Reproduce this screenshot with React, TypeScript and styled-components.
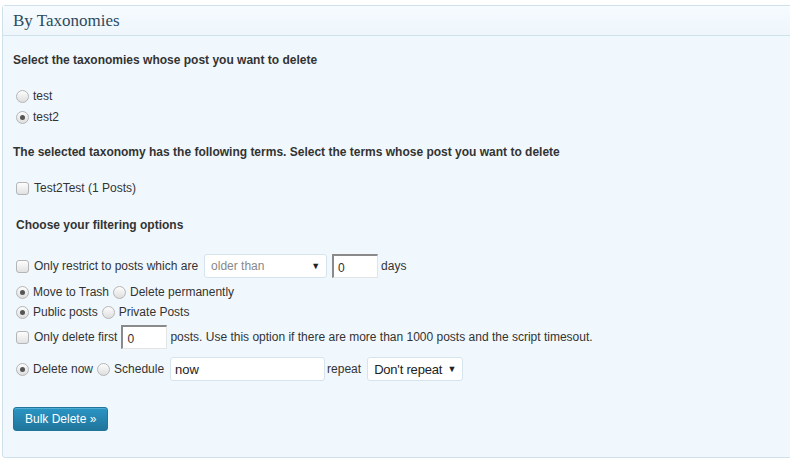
import styled, { createGlobalStyle } from 'styled-components';

const Global = createGlobalStyle`
    html, body {
        margin: 0;
        padding: 0;
        background: #fff;
        overflow: hidden;
    }
    body {
        font-family: "Liberation Sans", Arial, sans-serif;
        font-size: 12px;
        color: #333;
    }
`;

const Panel = styled.div`
    margin: 5px 0 0 2px;
    width: 820px;
    border: 1px solid #cfe2ec;
    border-radius: 3px;
    background: #f1f8fd;
`;

const PanelHeader = styled.div`
    height: 29px;
    display: flex;
    align-items: center;
    padding-left: 10px;
    border-bottom: 1px solid #cfe2ec;
    background: linear-gradient(to bottom, #f6fbff, #eef6fc);
    font-family: "Liberation Serif", "Times New Roman", serif;
    font-size: 17px;
    color: #2d4a5e;
`;

const Body = styled.div`
    padding: 0 10px 26px 10px;
`;

const Heading = styled.div<{ $top: number; $indent?: number }>`
    margin-top: ${(p) => p.$top}px;
    padding-left: ${(p) => p.$indent ?? 0}px;
    font-weight: bold;
    line-height: 16px;
`;

const Row = styled.div<{ $top: number; $h?: number }>`
    margin-top: ${(p) => p.$top}px;
    height: ${(p) => p.$h ?? 20}px;
    display: flex;
    align-items: center;
    padding-left: 3px;
    white-space: nowrap;
`;

const Radio = styled.span<{ $on?: boolean }>`
    width: 11px;
    height: 11px;
    border-radius: 50%;
    border: 1px solid #b5b5b5;
    background: linear-gradient(to bottom, #fdfdfd, #dedede);
    display: inline-flex;
    align-items: center;
    justify-content: center;
    flex-shrink: 0;
    margin-right: 4px;

    &::after {
        content: '';
        display: ${(p) => (p.$on ? 'block' : 'none')};
        width: 5px;
        height: 5px;
        border-radius: 50%;
        background: #555;
    }
`;

const Check = styled.span`
    width: 11px;
    height: 11px;
    border-radius: 3px;
    border: 1px solid #b5b5b5;
    background: linear-gradient(to bottom, #fdfdfd, #e2e2e2);
    flex-shrink: 0;
    margin-right: 5px;
`;

const Label = styled.span`
    margin-right: 4px;
`;

const Select = styled.div<{ $w: number; $muted?: boolean }>`
    width: ${(p) => p.$w}px;
    height: 24px;
    box-sizing: border-box;
    margin: 0 5px 0 2px;
    padding: 0 6px 0 6px;
    display: flex;
    align-items: center;
    justify-content: space-between;
    flex-shrink: 0;
    background: #fff;
    border: 1px solid #d6e4ee;
    border-radius: 3px;
    color: ${(p) => (p.$muted ? '#888' : '#222')};
    font-size: ${(p) => (p.$muted ? 12 : 13)}px;
    letter-spacing: ${(p) => (p.$muted ? 0 : -0.2)}px;

    &::after {
        content: '▼';
        color: #222;
        font-size: 9px;
    }
`;

const SunkenInput = styled.div<{ $w: number }>`
    width: ${(p) => p.$w}px;
    height: 24px;
    box-sizing: border-box;
    margin-right: 3px;
    padding: 2px 0 0 4px;
    display: flex;
    align-items: center;
    flex-shrink: 0;
    background: #fff;
    border-style: solid;
    border-width: 2px 1px 1px 2px;
    border-color: #8a8a8a #e4e4e4 #e4e4e4 #8a8a8a;
    color: #333;
`;

const TextInput = styled.div<{ $w: number }>`
    width: ${(p) => p.$w}px;
    height: 24px;
    box-sizing: border-box;
    margin: 0 2px 0 2px;
    padding: 0 4px;
    display: flex;
    align-items: center;
    flex-shrink: 0;
    background: #fff;
    border: 1px solid #d6e4ee;
    border-radius: 3px;
    color: #222;
    font-size: 13px;
`;

const Button = styled.button`
    margin-top: 26px;
    height: 24px;
    padding: 0 11px;
    border: 1px solid #21759b;
    border-radius: 3px;
    background: linear-gradient(to bottom, #2a95c5, #21759b);
    color: #fff;
    font-family: "Liberation Sans", Arial, sans-serif;
    font-size: 12px;
    box-shadow: inset 0 1px 0 rgba(120, 200, 230, 0.5);
`;

export default function App() {
    return (
        <>
            <Global />
            <Panel>
                <PanelHeader>By Taxonomies</PanelHeader>
                <Body>
                    <Heading $top={16}>Select the taxonomies whose post you want to delete</Heading>

                    <Row $top={18}>
                        <Radio />
                        <Label>test</Label>
                    </Row>
                    <Row $top={1}>
                        <Radio $on />
                        <Label>test2</Label>
                    </Row>

                    <Heading $top={17}>
                        The selected taxonomy has the following terms. Select the terms whose post you want to delete
                    </Heading>

                    <Row $top={18}>
                        <Check />
                        <Label>Test2Test (1 Posts)</Label>
                    </Row>

                    <Heading $top={19} $indent={3}>Choose your filtering options</Heading>

                    <Row $top={21} $h={24}>
                        <Check />
                        <Label>Only restrict to posts which are</Label>
                        <Select $w={123} $muted>older than</Select>
                        <SunkenInput $w={46}>0</SunkenInput>
                        <Label>days</Label>
                    </Row>
                    <Row $top={4}>
                        <Radio $on />
                        <Label>Move to Trash</Label>
                        <Radio />
                        <Label>Delete permanently</Label>
                    </Row>
                    <Row $top={0}>
                        <Radio $on />
                        <Label>Public posts</Label>
                        <Radio />
                        <Label>Private Posts</Label>
                    </Row>
                    <Row $top={3} $h={24}>
                        <Check />
                        <Label>Only delete first</Label>
                        <SunkenInput $w={46}>0</SunkenInput>
                        <Label>posts. Use this option if there are more than 1000 posts and the script timesout.</Label>
                    </Row>
                    <Row $top={8} $h={24}>
                        <Radio $on />
                        <Label>Delete now</Label>
                        <Radio />
                        <Label>Schedule</Label>
                        <TextInput $w={155}>now</TextInput>
                        <Label>repeat</Label>
                        <Select $w={96}>Don't repeat</Select>
                    </Row>

                    <Button>Bulk Delete »</Button>
                </Body>
            </Panel>
        </>
    );
}
